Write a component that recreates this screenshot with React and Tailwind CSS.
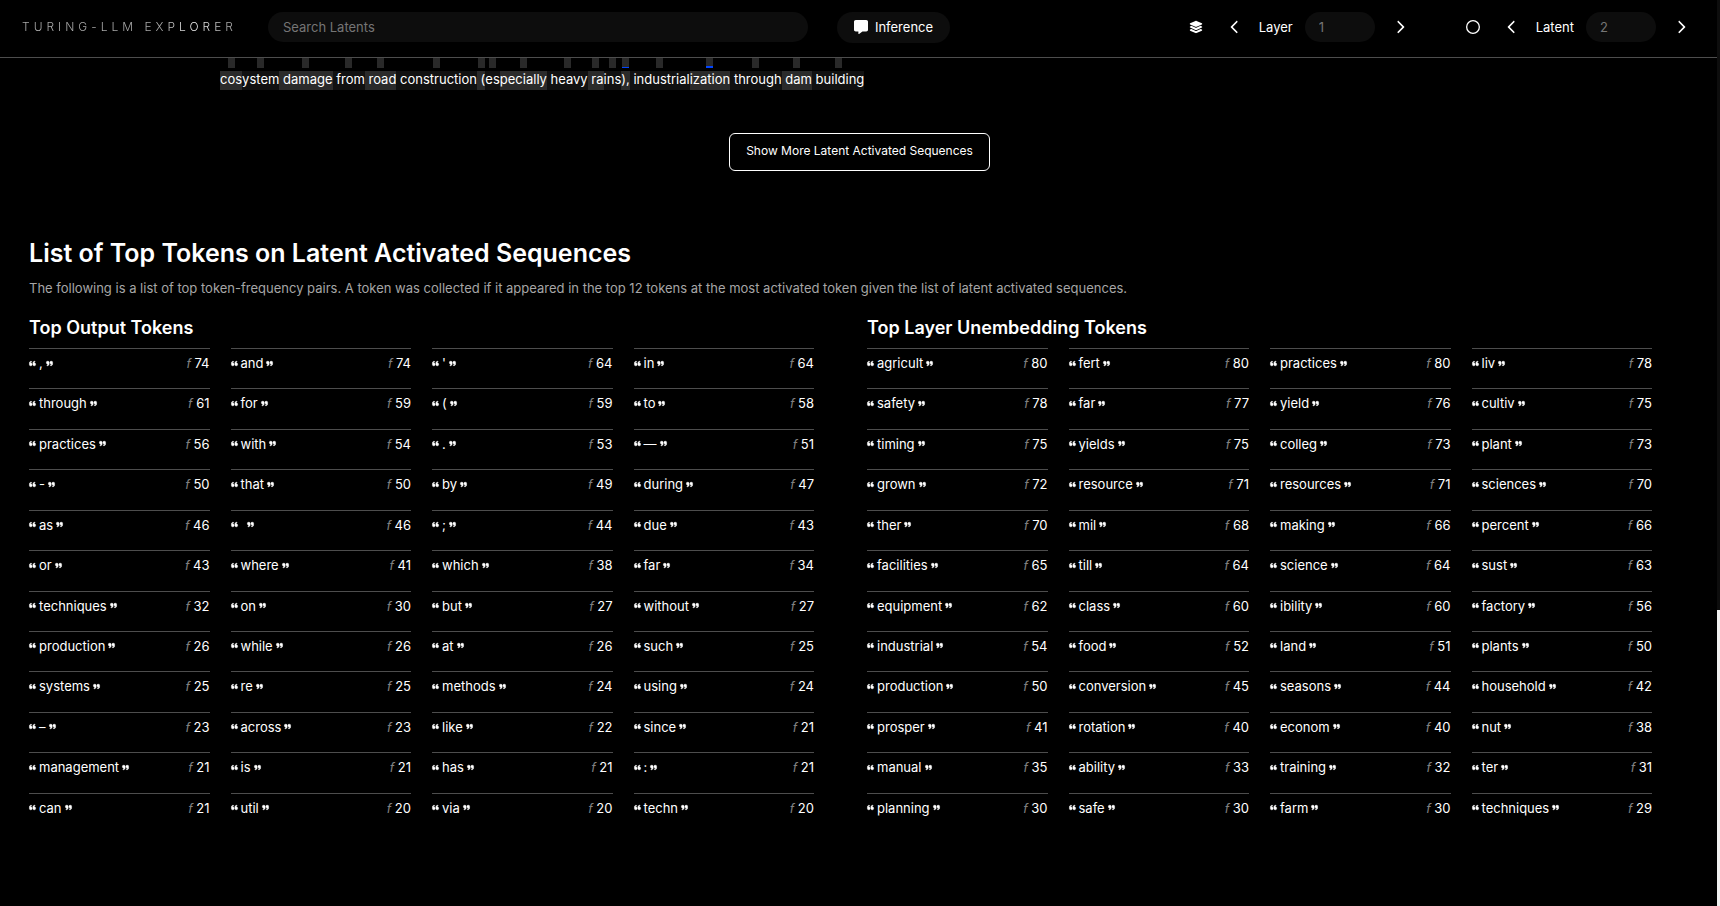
import {
  FaChevronLeft,
  FaChevronRight,
  FaLayerGroup,
  FaMessage,
  FaQuoteLeft,
  FaQuoteRight,
  FaRegCircle,
} from "react-icons/fa6";

const sequence = [
  ["cos", 0],
  ["ystem", 0],
  [" damage", 0],
  [" from", 0],
  [" road", 0],
  [" construction", 0],
  [" (", 0],
  ["es", 0],
  ["pecially", 0],
  [" heavy", 0],
  [" ra", 0],
  ["ins", 0],
  ["),", 1],
  [" industrial", 0],
  ["ization", 2],
  [" through", 0],
  [" dam", 0],
  [" building", 0],
];

const outputTokens = [
  [",", 74], ["and", 74], ["'", 64], ["in", 64],
  ["through", 61], ["for", 59], ["(", 59], ["to", 58],
  ["practices", 56], ["with", 54], [".", 53], ["—", 51],
  ["-", 50], ["that", 50], ["by", 49], ["during", 47],
  ["as", 46], [" ", 46], [";", 44], ["due", 43],
  ["or", 43], ["where", 41], ["which", 38], ["far", 34],
  ["techniques", 32], ["on", 30], ["but", 27], ["without", 27],
  ["production", 26], ["while", 26], ["at", 26], ["such", 25],
  ["systems", 25], ["re", 25], ["methods", 24], ["using", 24],
  ["–", 23], ["across", 23], ["like", 22], ["since", 21],
  ["management", 21], ["is", 21], ["has", 21], [":", 21],
  ["can", 21], ["util", 20], ["via", 20], ["techn", 20],
];

const unembeddingTokens = [
  ["agricult", 80], ["fert", 80], ["practices", 80], ["liv", 78],
  ["safety", 78], ["far", 77], ["yield", 76], ["cultiv", 75],
  ["timing", 75], ["yields", 75], ["colleg", 73], ["plant", 73],
  ["grown", 72], ["resource", 71], ["resources", 71], ["sciences", 70],
  ["ther", 70], ["mil", 68], ["making", 66], ["percent", 66],
  ["facilities", 65], ["till", 64], ["science", 64], ["sust", 63],
  ["equipment", 62], ["class", 60], ["ibility", 60], ["factory", 56],
  ["industrial", 54], ["food", 52], ["land", 51], ["plants", 50],
  ["production", 50], ["conversion", 45], ["seasons", 44], ["household", 42],
  ["prosper", 41], ["rotation", 40], ["econom", 40], ["nut", 38],
  ["manual", 35], ["ability", 33], ["training", 32], ["ter", 31],
  ["planning", 30], ["safe", 30], ["farm", 30], ["techniques", 29],
];

function Stepper({ label, value, icon }) {
  const id = `${label.toLowerCase()}-number`;
  return (
    <div className="flex items-center">
      {icon}
      <button type="button" aria-label={`Previous ${label}`} className="ml-6 flex w-4 justify-center">
        <FaChevronLeft className="size-3.5" />
      </button>
      <label htmlFor={id} className="ml-4">
        {label}
      </label>
      <input
        id={id}
        type="text"
        placeholder={value}
        className="ml-3 h-[30px] w-[70px] rounded-full bg-[#0d0d0d] px-3.5 outline-none placeholder:text-[#757575]"
      />
      <button type="button" aria-label={`Next ${label}`} className="ml-[17px] flex w-4 justify-center">
        <FaChevronRight className="size-3.5" />
      </button>
    </div>
  );
}

function TokenList({ title, tokens }) {
  return (
    <section className="flex-1">
      <h3 className="text-lg leading-6 font-semibold">{title}</h3>
      <ol className="mt-2 grid h-[485px] auto-rows-fr grid-cols-4 gap-x-[21px]">
        {tokens.map(([token, frequency], index) => (
          <li key={index} className="flex items-start justify-between border-t border-[#4d4d4d] pt-[5px]">
            <span className="flex items-center gap-[3px] whitespace-pre">
              <FaQuoteLeft className="size-[7px] overflow-visible stroke-40" />
              <span>{token}</span>
              <FaQuoteRight className="size-[7px] overflow-visible stroke-40" />
            </span>
            <span>
              <i className="font-['Roboto',sans-serif] text-[#808080]">f</i> {frequency}
            </span>
          </li>
        ))}
      </ol>
    </section>
  );
}

export default function App() {
  return (
    <div className="flex min-h-screen bg-black font-['Inter',sans-serif] text-[13px] leading-[18px] text-white">
      <div className="min-w-0 flex-1">
        <header className="flex h-[58px] items-center border-b border-[#4d4d4d] pr-7 pb-[3px] pl-[22px]">
          <a
            href="#"
            className="bg-linear-to-r from-[#b0b0b0] from-65% via-white via-80% to-[#b0b0b0] to-95% bg-clip-text text-xs font-light tracking-[4px] whitespace-nowrap text-transparent"
          >
            TURING-LLM EXPLORER
          </a>
          <input
            type="search"
            aria-label="Search Latents"
            placeholder="Search Latents"
            className="ml-[31px] h-[30px] w-[540px] rounded-full bg-[#0d0d0d] px-[15px] outline-none placeholder:text-[#757575]"
          />
          <button type="button" className="ml-[29px] flex h-[31px] items-center gap-[7px] rounded-full bg-[#0d0d0d] px-[17px]">
            <FaMessage className="size-3.5" />
            Inference
          </button>
          <div className="ml-auto flex items-center gap-[58px]">
            <Stepper label="Layer" value="1" icon={<FaLayerGroup className="size-3.5" />} />
            <Stepper label="Latent" value="2" icon={<FaRegCircle className="size-3.5" />} />
          </div>
        </header>

        <main className="pr-[65px] pl-[29px]">
          <p className="flex pl-[191px] leading-4">
            {sequence.map(([text, activation], index) => (
              <span key={index} className="group flex flex-col items-center gap-[3px]">
                <span className="flex h-2.5 w-[7px] flex-col justify-end bg-[#292929]">
                  {activation > 0 && <span className={activation > 1 ? "h-0.5 bg-[#0044ff]" : "h-px bg-[#0044ff]"} />}
                </span>
                <span className="h-[19px] bg-[#111111] whitespace-pre group-odd:bg-[#2b2b2b]">{text}</span>
              </span>
            ))}
          </p>

          <div className="mt-[43px] flex justify-center pl-[38px]">
            <button type="button" className="h-[38px] rounded-md border border-white px-4 pb-0.5 text-xs">
              Show More Latent Activated Sequences
            </button>
          </div>

          <h2 className="mt-[66px] text-[25px] leading-8 font-semibold">
            List of Top Tokens on Latent Activated Sequences
          </h2>
          <p className="mt-2.5 text-[#a6a6a6]">
            The following is a list of top token-frequency pairs. A token was collected if it appeared in the top 12
            tokens at the most activated token given the list of latent activated sequences.
          </p>
          <div className="mt-[19px] flex gap-[53px] pb-16">
            <TokenList title="Top Output Tokens" tokens={outputTokens} />
            <TokenList title="Top Layer Unembedding Tokens" tokens={unembeddingTokens} />
          </div>
        </main>
      </div>
      <div aria-hidden="true" className="flex w-[3px] flex-col justify-end bg-[#0d0d0d]">
        <div className="h-[296px] bg-[#f0f0f0]" />
      </div>
    </div>
  );
}
